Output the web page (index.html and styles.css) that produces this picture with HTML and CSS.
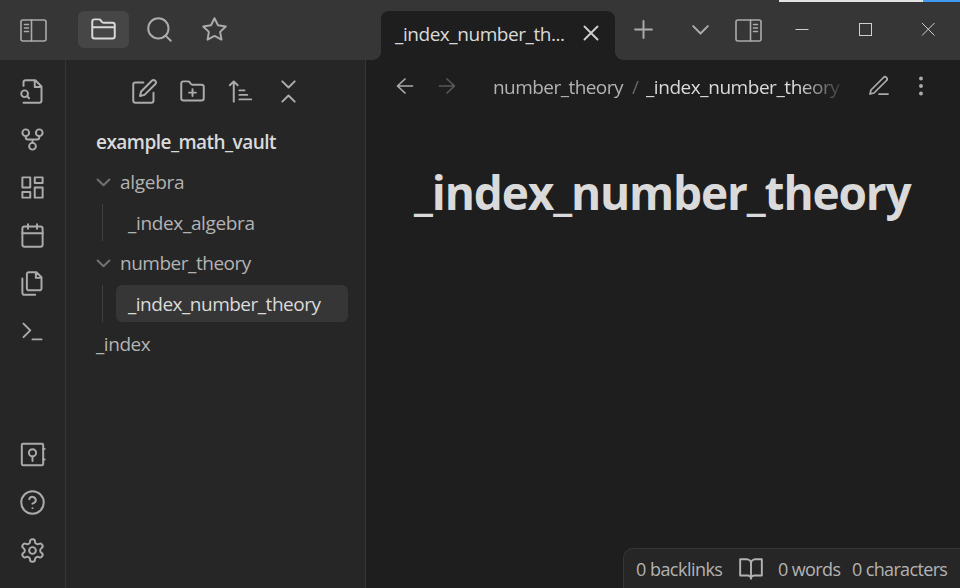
FILE: index.html
```
<!DOCTYPE html>
<html lang="en">
<head>
<meta charset="utf-8">
<title>_index_number_theory</title>
<link rel="stylesheet" href="styles.css">
</head>
<body>
<div class="app">
  <header class="titlebar">
    <div class="left-tabs">
      <span class="cell toggle"><svg class="panel" viewBox="0 0 27 23"><rect x="1" y="1" width="25" height="21" rx="2"/><path d="M11.500 1v21M4.500 5.500h4M4.500 9h4M4.500 12.500h4"/></svg></span>
      <span class="cell active"><svg viewBox="0 0 24 24"><path d="M4 20h16a2 2 0 0 0 2-2V8a2 2 0 0 0-2-2h-7.93a2 2 0 0 1-1.66-.9l-.82-1.2A2 2 0 0 0 7.93 3H4a2 2 0 0 0-2 2v13c0 1.1.9 2 2 2ZM2 10h20"/></svg></span>
      <span class="cell search"><svg viewBox="0 0 24 24"><circle cx="11" cy="11" r="9"/><path d="m22 22-4.6-4.6"/></svg></span>
      <span class="cell star"><svg viewBox="0 0 24 24"><path d="m12 2 3.09 6.26L22 9.27l-5 4.87 1.18 6.88L12 17.77l-6.18 3.25L7 14.14 2 9.27l6.91-1.01z"/></svg></span>
    </div>
    <div class="tab"><span class="tab-title">_index_number_th...</span><svg class="tab-close" viewBox="0 0 24 24"><path d="M18 6 6 18M6 6l12 12"/></svg></div>
    <div class="tab-actions">
      <span class="cell plus"><svg viewBox="0 0 24 24"><path d="M4.500 12h15M12 4.500v15"/></svg></span>
      <span class="cell down"><svg viewBox="0 0 24 24"><path d="m5.500 9 6.500 6.500L18.500 9"/></svg></span>
      <span class="cell right-toggle"><svg class="panel" viewBox="0 0 27 23"><rect x="1" y="1" width="25" height="21" rx="2"/><path d="M15.500 1v21M18.500 5.500h4M18.500 9h4M18.500 12.500h4"/></svg></span>
    </div>
    <div class="window-controls">
      <svg viewBox="0 0 14 14"><path d="M.5 7.500h13"/></svg>
      <svg viewBox="0 0 14 14"><rect x="1.500" y="1.500" width="12" height="12"/></svg>
      <svg viewBox="0 0 14 14"><path d="m1 1 12.500 12.500M13.500 1 1 13.500"/></svg>
    </div>
    <div class="edge-strip"></div>
  </header>
  <div class="workspace">
    <nav class="ribbon">
      <svg viewBox="0 0 24 24"><path d="M4 22h14a2 2 0 0 0 2-2V7.500L14.500 2H6a2 2 0 0 0-2 2v3M14 2v6h6M9 18l-1.500-1.500"/><circle cx="5" cy="14" r="3"/></svg>
      <svg viewBox="0 0 24 24"><circle cx="12" cy="18" r="3"/><circle cx="6" cy="6" r="3"/><circle cx="18" cy="6" r="3"/><path d="M18 9v1a2 2 0 0 1-2 2H8a2 2 0 0 1-2-2V9M12 12v3"/></svg>
      <svg viewBox="0 0 24 24"><path d="M3 3h7v9H3zM14 3h7v5h-7zM14 12h7v9h-7zM3 16h7v5H3z"/></svg>
      <svg viewBox="0 0 24 24"><rect x="3" y="4" width="18" height="18" rx="2"/><path d="M16 2v4M8 2v4M3 10h18"/></svg>
      <svg viewBox="0 0 24 24"><path d="M15.500 2H8.600c-.4 0-.8.2-1.100.5-.3.3-.5.7-.5 1.100v12.800c0 .4.2.8.5 1.100.3.3.7.5 1.100.5h9.800c.4 0 .8-.2 1.100-.5.3-.3.5-.7.5-1.100V6.500L15.500 2zM3 7.600v12.800c0 .4.2.8.5 1.100.3.3.7.5 1.100.5h9.800M15 2v5h5"/></svg>
      <svg viewBox="0 0 24 24"><path d="m4 17 6-6-6-6M12 19h8"/></svg>
      <span class="spacer"></span>
      <svg viewBox="0 0 24 24"><rect x="2.500" y="2.500" width="19" height="19" rx="1"/><circle cx="12" cy="10.500" r="3.200"/><path d="M12 13.700v4M21.500 7h1.300M21.500 16.500h1.300"/></svg>
      <svg viewBox="0 0 24 24"><circle cx="12" cy="12" r="10"/><path d="M9.090 9a3 3 0 0 1 5.830 1c0 2-3 3-3 3M12 17h.01"/></svg>
      <svg viewBox="0 0 24 24"><path d="M12.220 2h-.44a2 2 0 0 0-2 2v.18a2 2 0 0 1-1 1.730l-.43.25a2 2 0 0 1-2 0l-.15-.08a2 2 0 0 0-2.730.73l-.22.38a2 2 0 0 0 .73 2.730l.15.1a2 2 0 0 1 1 1.720v.51a2 2 0 0 1-1 1.740l-.15.09a2 2 0 0 0-.73 2.730l.22.38a2 2 0 0 0 2.730.73l.15-.08a2 2 0 0 1 2 0l.43.25a2 2 0 0 1 1 1.730V20a2 2 0 0 0 2 2h.44a2 2 0 0 0 2-2v-.18a2 2 0 0 1 1-1.730l.43-.25a2 2 0 0 1 2 0l.15.08a2 2 0 0 0 2.730-.73l.22-.39a2 2 0 0 0-.73-2.730l-.15-.08a2 2 0 0 1-1-1.740v-.5a2 2 0 0 1 1-1.740l.15-.09a2 2 0 0 0 .73-2.730l-.22-.38a2 2 0 0 0-2.730-.73l-.15.08a2 2 0 0 1-2 0l-.43-.25a2 2 0 0 1-1-1.730V4a2 2 0 0 0-2-2z"/><circle cx="12" cy="12" r="3"/></svg>
    </nav>
    <aside class="explorer">
      <div class="explorer-actions">
        <svg viewBox="0 0 24 24"><path d="M11 4H4a2 2 0 0 0-2 2v14a2 2 0 0 0 2 2h14a2 2 0 0 0 2-2v-7M18.500 2.500a2.120 2.120 0 0 1 3 3L12 15l-4 1 1-4Z"/></svg>
        <svg viewBox="0 0 24 24"><path d="M4 20h16a2 2 0 0 0 2-2V8a2 2 0 0 0-2-2h-7.930a2 2 0 0 1-1.660-.9l-.82-1.200A2 2 0 0 0 7.930 3H4a2 2 0 0 0-2 2v13c0 1.100.9 2 2 2ZM12 10v6M9 13h6"/></svg>
        <svg viewBox="0 0 24 24"><path d="M2.500 6.500 6 3l3.500 3.500M6 3v18M11 11h4.500M11 15h7M11 19h10.500"/></svg>
        <svg viewBox="0 0 24 24"><path d="m6.500 3 5.500 5.500L17.500 3M6.500 21l5.500-5.500 5.500 5.500"/></svg>
      </div>
      <div class="vault">example_math_vault</div>
      <div class="folder"><svg viewBox="0 0 14 8"><path d="m1.500 1.200 5.500 5.300 5.500-5.300"/></svg><span class="short">algebra</span></div>
      <div class="children"><div class="file">_index_algebra</div></div>
      <div class="folder"><svg viewBox="0 0 14 8"><path d="m1.500 1.200 5.500 5.300 5.500-5.300"/></svg><span>number_theory</span></div>
      <div class="children"><div class="file selected">_index_number_theory</div></div>
      <div class="root-file">_index</div>
    </aside>
    <main class="note">
      <div class="view-header">
        <svg class="nav" viewBox="0 0 24 24"><path d="M19.500 12h-15M12 19l-7.500-7L12 5"/></svg>
        <svg class="nav dim" viewBox="0 0 24 24"><path d="M4.500 12h15M12 5l7.500 7-7.500 7"/></svg>
        <div class="crumbs"><span class="parent">number_theory</span><span class="slash">/</span><span class="current">_index_number_theory</span></div>
        <svg class="edit" viewBox="0 0 24 24"><path d="M12 20h9M16.500 3.500a2.120 2.120 0 0 1 3 3L7 19l-4 1 1-4Z"/></svg>
        <svg class="more" viewBox="0 0 24 24"><circle cx="12" cy="4.500" r="1.100"/><circle cx="12" cy="12" r="1.100"/><circle cx="12" cy="19.500" r="1.100"/></svg>
      </div>
      <h1>_index_number_theory</h1>
      <footer class="status">
        <span class="backlinks">0 backlinks</span>
        <svg viewBox="0 0 24 24"><path d="M2 3h6a4 4 0 0 1 4 4v14a3 3 0 0 0-3-3H2zM22 3h-6a4 4 0 0 0-4 4v14a3 3 0 0 1 3-3h7z"/></svg>
        <span class="words">0 words</span>
        <span class="chars">0 characters</span>
      </footer>
    </main>
  </div>
</div>
</body>
</html>
```
FILE: styles.css
```
* { box-sizing: border-box; }
body { margin: 0; background: #1e1e1e; color: #b3b3b3; font: 19px/27px "Open Sans", "Noto Sans", sans-serif; overflow: hidden; }
svg { display: block; width: 27px; height: 27px; flex: none; fill: none; stroke: #ababab; stroke-width: 1.75; stroke-linecap: round; stroke-linejoin: round; }
span, div { white-space: nowrap; }
.app { width: 960px; height: 588px; display: flex; flex-direction: column; }

.titlebar { height: 60px; flex: none; display: flex; background: #363636; position: relative; }
.left-tabs { width: 381px; padding-bottom: 1px; display: flex; align-items: center; }
.cell { display: flex; align-items: center; justify-content: center; height: 37px; flex: none; }
.toggle { width: 67px; }
.active { width: 51px; margin-left: 11px; border-radius: 6px; background: #464646; }
.active svg { stroke: #dadada; }
.search { width: 61px; }
.star { width: 49px; }
svg.panel { width: 27px; height: 23px; margin-top: 2px; stroke-width: 1.6; }
.tab { width: 234px; margin-top: 11px; padding: 0 11px 6px 14px; display: flex; align-items: center; justify-content: space-between; border-radius: 8px 8px 0 0; background: #1e1e1e; color: #dadada; position: relative; }
.tab::before, .tab::after { content: ""; position: absolute; bottom: 0; width: 8px; height: 8px; }
.tab::before { left: -8px; background: radial-gradient(circle at 0 0, transparent 7.5px, #1e1e1e 8px); }
.tab::after { right: -8px; background: radial-gradient(circle at 100% 0, transparent 7.5px, #1e1e1e 8px); }
.tab-title { padding-top: 4px; letter-spacing: -.44px; }
svg.tab-close { width: 26px; height: 26px; stroke: #cecece; }
.tab-actions { padding-bottom: 1px; display: flex; align-items: center; }
.plus { width: 57px; }
.down { width: 57px; }
.right-toggle { width: 39px; }
.window-controls { width: 140px; margin-left: 27px; padding-bottom: 2px; display: flex; align-items: center; gap: 49px; }
.window-controls svg { width: 14px; height: 14px; stroke: #cfcfcf; stroke-width: 1; stroke-linecap: butt; stroke-linejoin: miter; }
.edge-strip { position: absolute; top: 0; right: 0; width: 181px; height: 2px; background: linear-gradient(90deg, #e4e4e4 144px, #4299f5 144px); }

.workspace { flex: 1; min-height: 0; display: flex; }
.ribbon { width: 66px; padding: 18px 0 24px 19px; display: flex; flex-direction: column; gap: 21px; background: #262626; border-right: 1px solid #363636; }
.spacer { flex: 1; }
.explorer { width: 300px; padding: 18px 17px 0 30px; display: flex; flex-direction: column; background: #262626; border-right: 1px solid #363636; letter-spacing: -.48px; }
.explorer-actions { height: 27px; margin: 0 0 18.400px 35px; display: flex; gap: 21px; }
.vault, .folder, .root-file { height: 37px; margin-bottom: 3.500px; line-height: 37px; flex: none; }
.vault { color: #dadada; font-weight: 600; letter-spacing: -.53px; line-height: 39px; }
.folder { display: flex; align-items: center; gap: 10px; }
.folder svg { width: 15px; height: 9px; margin-right: -1px; stroke: #717171; stroke-width: 1.900; }
.short { letter-spacing: -.3px; }
.children { height: 37px; margin: 0 0 3.500px 6px; padding-left: 13px; border-left: 1px solid #404040; flex: none; }
.file { height: 37px; padding-left: 12px; line-height: 39px; border-radius: 6px; letter-spacing: -.35px; }
.selected { background: #363636; color: #dadada; letter-spacing: -.5px; }
.root-file { letter-spacing: -.45px; }

.note { flex: 1; min-width: 0; display: flex; flex-direction: column; background: #1e1e1e; }
.view-header { height: 52px; padding-left: 27px; display: flex; align-items: center; flex: none; }
svg.nav { width: 24px; height: 24px; margin-right: 18px; stroke-width: 1.700; }
svg.dim { stroke: #595959; }
.crumbs { width: 348px; margin-left: 16px; padding-top: 2px; display: flex; overflow: hidden; letter-spacing: -.45px; mask-image: linear-gradient(90deg, #000 305px, transparent 354px); }
.parent { width: 139px; letter-spacing: -.55px; }
.slash { width: 14px; color: #666; }
.current { color: #dadada; }
svg.edit { width: 24px; height: 24px; margin-left: 26px; }
svg.more { width: 24px; height: 24px; margin-left: 18px; fill: #ababab; }
h1 { margin: 44px 0 0 48px; color: #dadada; font-size: 46px; line-height: 72px; font-weight: 700; letter-spacing: -1.150px; white-space: nowrap; }
.status { width: 337px; height: 40px; margin: auto 0 0 auto; padding: 1px 0 0 12px; display: flex; align-items: center; flex: none; border: 1px solid #363636; border-width: 1px 0 0 1px; border-radius: 10px 0 0; background: #262626; font-size: 18px; letter-spacing: -.53px; }
.status svg { stroke: #b3b3b3; width: 26px; height: 26px; }
.backlinks { width: 102px; }
.words { width: 74px; margin-left: 14px; letter-spacing: -.6px; }
.chars { letter-spacing: -.65px; }
```
